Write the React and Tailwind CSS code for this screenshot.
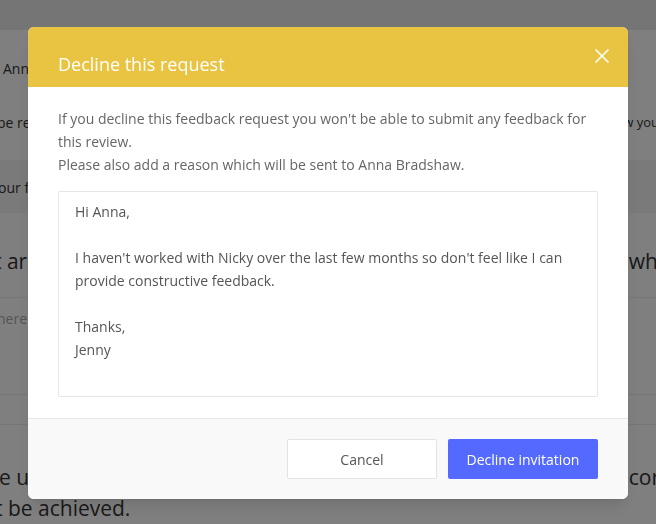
import { X } from 'lucide-react'

const font = { fontFamily: '"Open Sans", "Liberation Sans", sans-serif' }

function PageBehind() {
  // the review page sitting under the dimmed overlay
  return (
    <div className="h-[524px] overflow-hidden bg-white text-[#333]">
      <div className="h-[30px] bg-[#ebebeb]" />
      <div className="h-[130px] pt-[27px]">
        <p className="pl-[3px] text-[14px] leading-[23px]">Anna Bradshaw has asked you for feedback</p>
        <div className="mt-[31px] flex justify-between text-[14px] leading-[23px]">
          <span className="-ml-[3px]">be read by Anna Bradshaw</span>
          <span className="-mr-[3px] text-[13px]">how you</span>
        </div>
      </div>
      <div className="h-[53px] bg-[#f4f4f4] pt-[16px]">
        <p className="-ml-[9px] text-[14px] leading-[23px]">your feedback</p>
      </div>
      <div className="flex h-[85px] items-end justify-between border-b border-[#ececec] pb-[22px] text-[21px] leading-[28px]">
        <span className="-ml-[6px]">t are</span>
        <span className="-mr-[2px]">wh</span>
      </div>
      <div className="h-[97px] border-b border-[#ececec] pt-[9px]">
        <p className="-ml-[3px] text-[14px] leading-[23px] text-[#aaa]">here</p>
      </div>
      <div className="h-[30px] border-b border-[#ececec]" />
      <div className="flex justify-between pt-[37px] text-[21px] leading-[31px]">
        <span className="-ml-[1px]">e up</span>
        <span className="-mr-[4px]">cor</span>
      </div>
      <p className="-ml-[5px] text-[21px] leading-[31px]">t be achieved.</p>
    </div>
  )
}

export default function App() {
  return (
    <div className="relative h-[524px] w-[656px] overflow-hidden" style={font}>
      <PageBehind />
      <div className="fixed inset-0 flex items-start justify-center bg-black/50 pt-[27px]">
        <div className="relative w-[600px] overflow-hidden rounded-[6px] bg-white shadow-lg">
          <div className="h-[60px] bg-[#e9c442] px-[30px] pt-[25px]">
            <h2 className="text-[18px] leading-[24px] font-normal text-white">Decline this request</h2>
          </div>
          <button className="absolute right-[14px] top-[17px] text-white">
            <X size={24} strokeWidth={1.6} />
          </button>

          <div className="px-[30px] pt-[20px] pb-[21px]">
            <p className="text-[14px] leading-[23px] text-[#666]">
              If you decline this feedback request you won't be able to submit any feedback for this review.
              <br />
              Please also add a reason which will be sent to Anna Bradshaw.
            </p>
            <textarea
              readOnly
              className="mt-[15px] block h-[206px] w-full resize-none rounded-[2px] border border-[#e6e6e6] px-[16px] pt-[8px] text-[14px] leading-[23px] text-[#555] outline-none"
              defaultValue={"Hi Anna,\n\nI haven't worked with Nicky over the last few months so don't feel like I can provide constructive feedback.\n\nThanks,\nJenny"}
            />
          </div>

          <div className="flex justify-end gap-[11px] border-t border-[#e6e6e6] bg-[#f9f9f9] px-[30px] pt-[20px] pb-[20px]">
            <button className="h-[40px] w-[150px] rounded-[2px] border border-[#e3e3e3] bg-white text-[14px] text-[#555]">
              Cancel
            </button>
            <button className="h-[40px] w-[150px] rounded-[2px] bg-[#5469ff] text-[14px] text-white">
              Decline invitation
            </button>
          </div>
        </div>
      </div>
    </div>
  )
}
